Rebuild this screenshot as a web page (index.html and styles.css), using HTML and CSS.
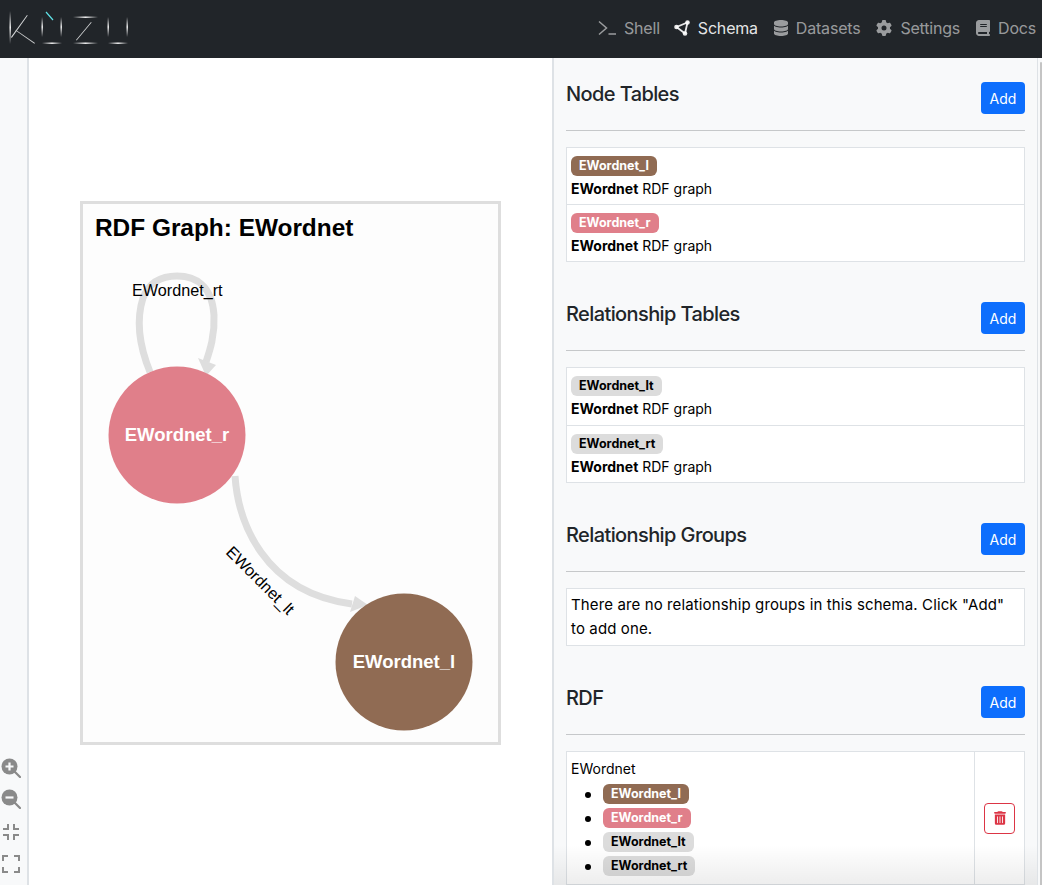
FILE: index.html
```html
<!DOCTYPE html>
<html lang="en">
  <head>
    <meta charset="UTF-8" />
    <meta name="viewport" content="width=device-width, initial-scale=1.0" />
    <title>Kuzu Explorer</title>
    <link rel="stylesheet" href="styles.css">
  </head>
  <body>
    <header class="topbar">
      <svg class="logo" width="140" height="58" viewBox="0 0 140 58" aria-label="Kuzu">
        <defs>
          <linearGradient id="fadeV" x1="0" y1="0" x2="0" y2="1">
            <stop offset="0" stop-color="#fff" stop-opacity="0" />
            <stop offset="0.5" stop-color="#fff" stop-opacity="1" />
            <stop offset="1" stop-color="#fff" stop-opacity="0" />
          </linearGradient>
          <linearGradient id="fadeH" x1="0" y1="0" x2="1" y2="0">
            <stop offset="0" stop-color="#fff" stop-opacity="0" />
            <stop offset="0.5" stop-color="#fff" stop-opacity="1" />
            <stop offset="1" stop-color="#fff" stop-opacity="0" />
          </linearGradient>
        </defs>
        <rect x="9.5" y="11" width="1.4" height="33" fill="url(#fadeV)" />
        <path d="M11 37 27 15 27.7 15.5 11.7 38Z" fill="#d6d8d9" />
        <path d="M16 30 35 43 34.4 43.7 15.5 30.6Z" fill="#c9cbcc" />
        <rect x="41.5" y="17" width="1.4" height="20" fill="url(#fadeV)" />
        <rect x="60.5" y="17" width="1.4" height="20" fill="url(#fadeV)" />
        <rect x="42" y="42.5" width="20" height="1.4" fill="url(#fadeH)" />
        <path d="M46 12 53 20" stroke="#5fe3e8" stroke-width="1.2" />
        <rect x="73" y="16.5" width="25" height="1.4" fill="url(#fadeH)" />
        <path d="M91 22 76 40 76.6 40.5 91.6 22.5Z" fill="#d6d8d9" />
        <rect x="73" y="42.5" width="25" height="1.4" fill="url(#fadeH)" />
        <rect x="107.500" y="17" width="1.4" height="20" fill="url(#fadeV)" />
        <rect x="126.500" y="17" width="1.4" height="20" fill="url(#fadeV)" />
        <rect x="108" y="42.5" width="20" height="1.4" fill="url(#fadeH)" />
      </svg>
      <nav class="nav">
        <a class="nav-link">
          <svg class="nav-icon" viewBox="0 0 18 16" width="18" height="16"><path d="M1 1.500 8.500 8 1 14.500M10.500 14H18" fill="none" stroke="currentColor" stroke-width="1.500" /></svg>
          Shell
        </a>
        <a class="nav-link active">
          <svg class="nav-icon" viewBox="0 0 16 16" width="16" height="16"><path d="M2.500 7 13.500 2.500 11 13.500M2.500 7 11 13.500" fill="none" stroke="currentColor" stroke-width="1.800" /><circle cx="2.500" cy="7" r="2.300" fill="currentColor" /><circle cx="13.500" cy="2.500" r="2.300" fill="currentColor" /><circle cx="11" cy="13.500" r="2.300" fill="currentColor" /></svg>
          Schema
        </a>
        <a class="nav-link">
          <svg class="nav-icon" viewBox="0 0 448 512" width="14" height="16"><path fill="currentColor" d="M448 80v48c0 44.200-100.300 80-224 80S0 172.200 0 128V80C0 35.800 100.300 0 224 0S448 35.800 448 80zM393.200 214.700c20.800-7.400 39.900-16.900 54.800-28.600V288c0 44.200-100.300 80-224 80S0 332.200 0 288V186.100c14.900 11.800 34 21.200 54.800 28.600C99.700 230.700 159.500 240 224 240s124.300-9.300 169.200-25.300zM0 346.100c14.900 11.800 34 21.200 54.800 28.600C99.700 390.700 159.500 400 224 400s124.300-9.300 169.200-25.300c20.800-7.400 39.900-16.900 54.800-28.600V432c0 44.200-100.300 80-224 80S0 476.200 0 432V346.100z" /></svg>
          Datasets
        </a>
        <a class="nav-link">
          <svg class="nav-icon" viewBox="0 0 512 512" width="16" height="16"><path fill="currentColor" d="M495.900 166.600c3.200 8.700 .5 18.400-6.400 24.600l-43.300 39.400c1.100 8.300 1.700 16.800 1.700 25.400s-.6 17.100-1.700 25.400l43.300 39.400c6.900 6.200 9.600 15.900 6.400 24.600c-4.400 11.900-9.700 23.300-15.800 34.300l-4.700 8.100c-6.600 11-14 21.400-22.100 31.200c-5.900 7.200-15.700 9.600-24.500 6.800l-55.700-17.700c-13.400 10.300-28.200 18.900-44 25.400l-12.500 57.100c-2 9.100-9 16.300-18.200 17.800c-13.800 2.300-28 3.500-42.500 3.500s-28.700-1.200-42.500-3.500c-9.200-1.500-16.200-8.700-18.200-17.800l-12.500-57.100c-15.800-6.500-30.600-15.100-44-25.400L83.100 425.900c-8.800 2.800-18.600 .3-24.500-6.800c-8.100-9.800-15.500-20.200-22.100-31.200l-4.700-8.100c-6.100-11-11.400-22.400-15.800-34.300c-3.200-8.700-.5-18.400 6.400-24.600l43.300-39.400C64.600 273.100 64 264.600 64 256s.6-17.100 1.700-25.400L22.400 191.200c-6.900-6.200-9.600-15.900-6.400-24.600c4.400-11.900 9.700-23.300 15.800-34.300l4.700-8.100c6.600-11 14-21.400 22.100-31.200c5.900-7.200 15.700-9.600 24.500-6.800l55.700 17.700c13.400-10.300 28.200-18.900 44-25.400l12.500-57.100c2-9.100 9-16.300 18.200-17.800C227.300 1.200 241.500 0 256 0s28.700 1.200 42.500 3.500c9.200 1.500 16.200 8.700 18.200 17.800l12.500 57.100c15.800 6.500 30.600 15.100 44 25.400l55.700-17.700c8.800-2.800 18.600-.3 24.500 6.800c8.100 9.800 15.500 20.200 22.100 31.200l4.700 8.100c6.100 11 11.400 22.400 15.800 34.300zM256 336a80 80 0 1 0 0-160 80 80 0 1 0 0 160z" /></svg>
          Settings
        </a>
        <a class="nav-link">
          <svg class="nav-icon" viewBox="0 0 448 512" width="14" height="16"><path fill="currentColor" d="M96 0C43 0 0 43 0 96V416c0 53 43 96 96 96H384h32c17.700 0 32-14.300 32-32s-14.300-32-32-32V384c17.700 0 32-14.300 32-32V32c0-17.700-14.300-32-32-32H384 96zm0 384H352v64H96c-17.700 0-32-14.300-32-32s14.300-32 32-32zm32-240c0-8.800 7.200-16 16-16H336c8.800 0 16 7.200 16 16s-7.200 16-16 16H144c-8.800 0-16-7.200-16-16zm16 48H336c8.800 0 16 7.200 16 16s-7.200 16-16 16H144c-8.800 0-16-7.200-16-16s7.200-16 16-16z" /></svg>
          Docs
        </a>
      </nav>
    </header>

    <main class="layout">
      <aside class="toolbar">
        <svg class="zoom-in" viewBox="0 0 20 20" width="20" height="20"><circle cx="8.500" cy="8.500" r="8" fill="currentColor" /><path d="M14 14 19 19" stroke="currentColor" stroke-width="2.200" stroke-linecap="round" /><path d="M8.500 4.500V12.500M4.500 8.500H12.500" stroke="#f8f9fa" stroke-width="2.200" /></svg>
        <svg viewBox="0 0 20 20" width="20" height="20"><circle cx="8.500" cy="8.500" r="8" fill="currentColor" /><path d="M14 14 19 19" stroke="currentColor" stroke-width="2.200" stroke-linecap="round" /><path d="M4.500 8.500H12.500" stroke="#f8f9fa" stroke-width="2.200" /></svg>
        <svg viewBox="0 0 18 18" width="18" height="18"><path d="M1 6H6V1M12 1V6H17M17 12H12V17M6 17V12H1" fill="none" stroke="currentColor" stroke-width="2" /></svg>
        <svg viewBox="0 0 18 18" width="18" height="18"><path d="M1 6V1H6M12 1H17V6M17 12V17H12M6 17H1V12" fill="none" stroke="currentColor" stroke-width="2" /></svg>
      </aside>

      <section class="canvas">
        <svg class="graph" width="415" height="538" viewBox="83 204 415 538">
          <text class="graph-title" x="95" y="236">RDF Graph: EWordnet</text>
          <path class="edge" d="M150 372C139 345 136 320 143 298C150 280 165 276 177 276C195 276 212 285 214 315C215 335 210 350 206 362" />
          <path class="arrow" d="M198 358 216 365 206 376Z" />
          <text class="edge-label" x="132" y="296">EWordnet_rt</text>
          <path class="edge" d="M235 476C238 520 262 592 352 604" />
          <path class="arrow" d="M355 596 368 605 350 612Z" />
          <text class="edge-label" transform="translate(225 553) rotate(45)">EWordnet_lt</text>
          <circle cx="177" cy="435" r="68.500" fill="#e07f8a" />
          <circle cx="404" cy="662" r="68.500" fill="#906b53" />
          <text class="node-label" x="177" y="441">EWordnet_r</text>
          <text class="node-label" x="404" y="668">EWordnet_l</text>
        </svg>
      </section>

      <aside class="panel">
        <div class="section-head">
          <h5>Node Tables</h5>
          <button class="btn-add">Add</button>
        </div>
        <hr />
        <div class="list">
          <div class="row">
            <span class="badge brown">EWordnet_l</span>
            <p><b>EWordnet</b> RDF graph</p>
          </div>
          <div class="row">
            <span class="badge pink">EWordnet_r</span>
            <p><b>EWordnet</b> RDF graph</p>
          </div>
        </div>

        <div class="section-head">
          <h5>Relationship Tables</h5>
          <button class="btn-add">Add</button>
        </div>
        <hr />
        <div class="list">
          <div class="row tall">
            <span class="badge gray">EWordnet_lt</span>
            <p><b>EWordnet</b> RDF graph</p>
          </div>
          <div class="row">
            <span class="badge gray">EWordnet_rt</span>
            <p><b>EWordnet</b> RDF graph</p>
          </div>
        </div>

        <div class="section-head">
          <h5>Relationship Groups</h5>
          <button class="btn-add">Add</button>
        </div>
        <hr />
        <div class="list">
          <div class="row">
            <p class="empty">There are no relationship groups in this schema. Click "Add" to add one.</p>
          </div>
        </div>

        <div class="section-head">
          <h5>RDF</h5>
          <button class="btn-add">Add</button>
        </div>
        <hr />
        <div class="list rdf">
          <div class="rdf-main">
            <p>EWordnet</p>
            <ul>
              <li><span class="badge brown">EWordnet_l</span></li>
              <li><span class="badge pink">EWordnet_r</span></li>
              <li><span class="badge gray">EWordnet_lt</span></li>
              <li><span class="badge gray">EWordnet_rt</span></li>
            </ul>
          </div>
          <div class="rdf-action">
            <button class="btn-delete">
              <svg viewBox="0 0 448 512" width="12" height="14"><path fill="currentColor" d="M135.200 17.700C140.600 6.800 151.700 0 163.800 0H284.200c12.100 0 23.200 6.800 28.600 17.700L320 32h96c17.700 0 32 14.300 32 32s-14.300 32-32 32H32C14.300 96 0 81.700 0 64S14.300 32 32 32h96l7.200-14.300zM32 128H416V448c0 35.300-28.700 64-64 64H96c-35.300 0-64-28.700-64-64V128zm96 64c-8.800 0-16 7.200-16 16V432c0 8.800 7.200 16 16 16s16-7.200 16-16V208c0-8.800-7.200-16-16-16zm96 0c-8.800 0-16 7.200-16 16V432c0 8.800 7.200 16 16 16s16-7.200 16-16V208c0-8.800-7.200-16-16-16zm96 0c-8.800 0-16 7.200-16 16V432c0 8.800 7.200 16 16 16s16-7.200 16-16V208c0-8.800-7.200-16-16-16z" /></svg>
            </button>
          </div>
        </div>
        <div class="panel-fade"></div>
      </aside>

      <div class="scroll-track"><div class="scroll-thumb"></div></div>
    </main>
  </body>
</html>
```

FILE: styles.css
```css
* {
  box-sizing: border-box;
}

html,
body {
  height: 100%;
}

body {
  margin: 0;
  overflow: hidden;
  font-family: Inter, "Liberation Sans", sans-serif;
  font-size: 14px;
  line-height: 21px;
  color: #000;
  background-color: #f8f9fa;
}

.topbar {
  height: 58px;
  background-color: #212529;
  display: flex;
  align-items: center;
  justify-content: space-between;
  padding-right: 6px;
}

.logo {
  display: block;
}

.nav {
  display: flex;
  gap: 16px;
  padding-bottom: 2px;
}

.nav-link {
  display: flex;
  align-items: center;
  gap: 8px;
  font-size: 16px;
  letter-spacing: -0.2px;
  color: rgba(255, 255, 255, 0.55);
}

.nav-link:first-child {
  margin-right: -2px;
}

.nav-link.active {
  color: rgba(255, 255, 255, 0.9);
}

.layout {
  display: flex;
  height: 827px;
}

.toolbar {
  width: 29px;
  border-right: 2px solid #dee2e6;
  display: flex;
  flex-direction: column;
  align-items: center;
  justify-content: flex-end;
  gap: 14px;
  padding: 0 6px 12px 0;
  color: #8a8a8a;
}

.toolbar svg {
  display: block;
}

.toolbar .zoom-in {
  margin-bottom: -3px;
}

.canvas {
  width: 523px;
  background-color: #fff;
  display: flex;
  align-items: center;
  justify-content: center;
  padding-top: 2px;
}

.graph {
  display: block;
  border: 3px solid #dedede;
  background-color: #fdfdfd;
  box-sizing: content-box;
  width: 415px;
  height: 538px;
}

.graph-title {
  font-family: "Liberation Sans", sans-serif;
  font-size: 24.4px;
  font-weight: 700;
  fill: #000;
}

.edge {
  fill: none;
  stroke: #dedede;
  stroke-width: 7;
}

.arrow {
  fill: #dedede;
}

.edge-label {
  font-family: "Liberation Sans", sans-serif;
  font-size: 16.2px;
  fill: #000;
}

.node-label {
  font-family: "Liberation Sans", sans-serif;
  font-size: 18.5px;
  font-weight: 700;
  fill: #fff;
  text-anchor: middle;
}

.panel {
  position: relative;
  width: 486px;
  height: 827px;
  overflow: hidden;
  border-left: 2px solid #dee2e6;
  border-right: 1px solid #dee2e6;
  padding: 24px 12px 0;
}

.scroll-track {
  width: 4px;
  padding: 4px 0 0 2px;
}

.scroll-thumb {
  height: 100%;
  background-color: #c4c4c4;
  border-radius: 2px 2px 0 0;
}

.section-head {
  display: flex;
  justify-content: space-between;
  align-items: flex-start;
  margin-top: 40px;
}

.panel > .section-head:first-child {
  margin-top: 0;
}

h5 {
  margin: 0;
  font-size: 20px;
  line-height: 24px;
  font-weight: 500;
  letter-spacing: -0.6px;
  color: #212529;
}

.btn-add {
  width: 44px;
  height: 32px;
  border: 0;
  border-radius: 4px;
  padding: 0;
  background-color: #0d6efd;
  color: #fff;
  font: 14px Inter, "Liberation Sans", sans-serif;
}

hr {
  margin: 16px 0;
  border: 0;
  border-top: 1px solid #c6c8ca;
}

.list {
  background-color: #fff;
  border: 1px solid #dee2e6;
}

.row {
  padding: 4px 4px 5px;
  border-top: 1px solid #dee2e6;
}

.row:first-child {
  border-top: 0;
}

.row.tall {
  padding-bottom: 6px;
}

.row p {
  margin: 0;
}

.row .empty {
  font-size: 15px;
  line-height: 24px;
  letter-spacing: 0.12px;
  margin-bottom: -1px;
}

.badge {
  display: inline-block;
  height: 20px;
  padding: 0 8px;
  border-radius: 6px;
  font-size: 12.5px;
  line-height: 20px;
  font-weight: 700;
  vertical-align: top;
}

.row .badge {
  margin: 4px 0 2px;
}

.brown {
  background-color: #906b53;
  color: #fff;
}

.pink {
  background-color: #e07f8a;
  color: #fff;
}

.gray {
  background-color: #dcdcdc;
  color: #000;
}

.rdf {
  display: flex;
}

.rdf-main {
  flex: 1;
  padding: 6px 4px 5px;
}

.rdf-main p {
  margin: 0 0 4px;
}

.rdf-main ul {
  margin: 0;
  padding-left: 32px;
}

.rdf-main li {
  height: 24px;
}

.rdf-main li::marker {
  font-size: 18px;
}

.rdf-action {
  width: 50px;
  border-left: 1px solid #dee2e6;
  display: flex;
  align-items: center;
  justify-content: center;
}

.btn-delete {
  width: 31px;
  height: 31px;
  border: 1px solid #dc3545;
  border-radius: 4px;
  background-color: transparent;
  color: #dc3545;
  padding: 0;
  display: flex;
  align-items: center;
  justify-content: center;
}

.panel-fade {
  position: absolute;
  left: 0;
  right: 0;
  bottom: 0;
  height: 40px;
  background: linear-gradient(to bottom, rgba(0, 0, 0, 0), rgba(0, 0, 0, 0.07));
}
```
